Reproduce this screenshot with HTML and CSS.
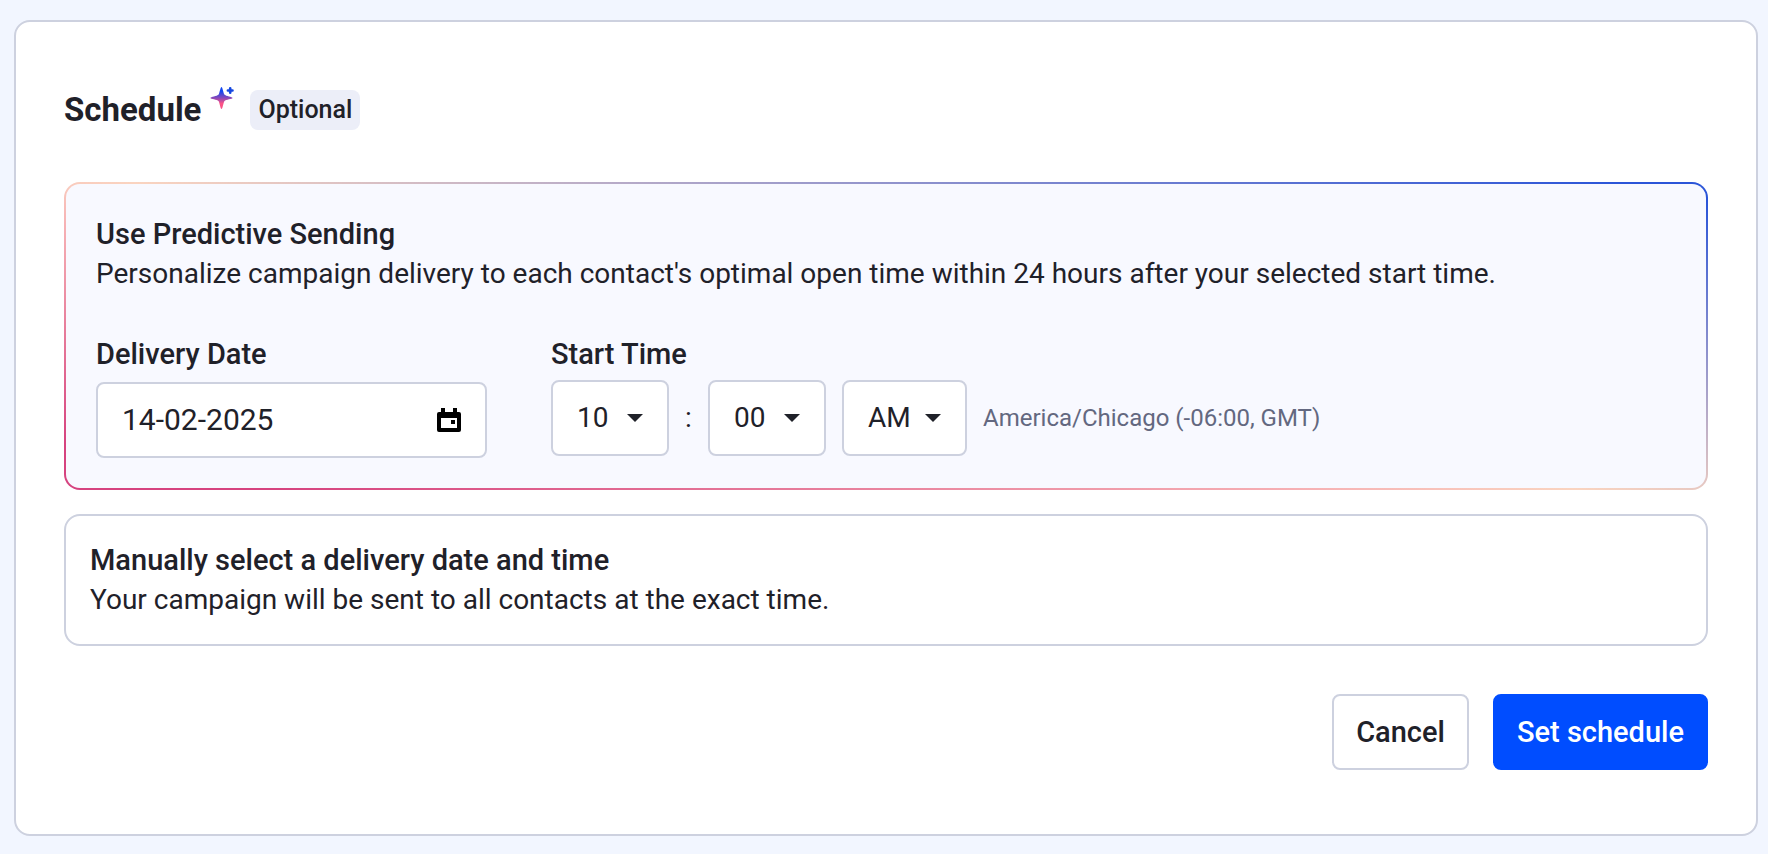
FILE: index.html
```html
<!DOCTYPE html>
<html lang="en">
<head>
<meta charset="utf-8">
<meta name="viewport" content="width=device-width, initial-scale=1">
<title>Schedule</title>
<link rel="stylesheet" href="styles.css">
</head>
<body>
<form class="card">
  <header class="card-header">
    <h1 class="title">Schedule</h1>
    <svg class="sparkle" viewBox="0 0 24 24" aria-hidden="true">
      <defs>
        <linearGradient id="spark" x1="0" y1="0" x2="0" y2="1">
          <stop offset="0.2" stop-color="#1447f0"/>
          <stop offset="0.5" stop-color="#8a48b8"/>
          <stop offset="0.75" stop-color="#fb5286"/>
        </linearGradient>
      </defs>
      <path fill="url(#spark)" d="M11.500 1C12.500 1 12.900 5 14.300 8.500C16 10.300 22.500 10.800 22.500 12C22.500 13.200 16 13.400 14.300 15.200C12.900 18.700 12.500 23 11.500 23C10.500 23 10.100 18.700 8.700 15.200C7 13.400 0.500 13.200 0.500 12C0.500 10.800 7 10.300 8.700 8.500C10.100 5 10.500 1 11.500 1Z"/>
      <path d="M20.200 2.200V6.800M17.900 4.500H22.500" fill="none" stroke="#1447e0" stroke-width="2.600" stroke-linecap="round"/>
    </svg>
    <span class="badge">Optional</span>
  </header>

  <section class="option option-predictive">
    <h2 class="option-title">Use Predictive Sending</h2>
    <p class="option-text">Personalize campaign delivery to each contact's optimal open time within 24 hours after your selected start time.</p>
    <div class="fields">
      <div class="field field-date">
        <label class="label" for="delivery-date">Delivery Date</label>
        <div class="control date-control">
          <input class="date-input" id="delivery-date" type="text" value="14-02-2025">
          <button class="date-button" type="button" aria-label="Open calendar">
            <svg class="calendar" viewBox="0 0 24 24" aria-hidden="true">
              <path fill-rule="evenodd" d="M4 0H8V4H16V0H20V4H22A2 2 0 0 1 24 6V22A2 2 0 0 1 22 24H2A2 2 0 0 1 0 22V6A2 2 0 0 1 2 4H4ZM4 10V20H20V10ZM14 12H18V16H14Z"/>
            </svg>
          </button>
        </div>
      </div>
      <div class="field">
        <label class="label" for="start-hour">Start Time</label>
        <div class="time">
          <span class="picker">
            <select class="control select" id="start-hour"><option>10</option></select>
            <svg class="arrow" viewBox="0 0 16 8" aria-hidden="true"><path d="M0 0H16L8 8Z"/></svg>
          </span>
          <span class="colon">:</span>
          <span class="picker">
            <select class="control select" aria-label="Minutes"><option>00</option></select>
            <svg class="arrow" viewBox="0 0 16 8" aria-hidden="true"><path d="M0 0H16L8 8Z"/></svg>
          </span>
          <span class="picker picker-period">
            <select class="control select" aria-label="AM or PM"><option>AM</option></select>
            <svg class="arrow" viewBox="0 0 16 8" aria-hidden="true"><path d="M0 0H16L8 8Z"/></svg>
          </span>
          <span class="zone">America/Chicago (-06:00, GMT)</span>
        </div>
      </div>
    </div>
  </section>

  <section class="option">
    <h2 class="option-title">Manually select a delivery date and time</h2>
    <p class="option-text">Your campaign will be sent to all contacts at the exact time.</p>
  </section>

  <footer class="actions">
    <button class="button" type="button">Cancel</button>
    <button class="button button-primary" type="submit">Set schedule</button>
  </footer>
</form>
</body>
</html>
```
FILE: styles.css
```css
* {
  box-sizing: border-box;
}

body {
  margin: 0;
  padding: 20px 10px 18px 14px;
  background: #f2f6ff;
  color: #1f2129;
  font: 400 28px/40px Roboto, sans-serif;
}

h1, h2, p {
  margin: 0;
}

input, select, button {
  font: inherit;
  color: inherit;
}

.card {
  padding: 68px 48px 64px;
  background: #fff;
  border: 2px solid #cdd1df;
  border-radius: 16px;
}

.card-header {
  display: flex;
  align-items: flex-start;
  margin-bottom: 52px;
}

.title {
  font-size: 33px;
  font-weight: 700;
}

.sparkle {
  width: 24px;
  height: 24px;
  margin: -4px 16px 0 9px;
}

.badge {
  padding: 0 8px;
  border-radius: 8px;
  background: #eceef8;
  font-size: 25px;
  font-weight: 500;
}

.option {
  margin-bottom: 24px;
  padding: 24px;
  border: 2px solid #cdd1df;
  border-radius: 16px;
}

.option-predictive {
  padding: 30px;
  border-color: transparent;
  background:
    linear-gradient(#f8f9ff, #f8f9ff) padding-box,
    linear-gradient(12deg, #d6437f 7%, #f6b0b4 40%, #fad4c0 49%, #2b55d8 97%) border-box;
}

.option-title,
.label,
.button {
  font-size: 29px;
  font-weight: 500;
}

.fields {
  display: flex;
  gap: 64px;
  margin-top: 40px;
}

.field {
  display: flex;
  flex-direction: column;
  gap: 6px;
}

.field-date {
  width: 391px;
  gap: 8px;
}

.control {
  height: 76px;
  border: 2px solid #cdd1df;
  border-radius: 8px;
  background: #fff;
}

.date-control {
  display: flex;
  align-items: center;
  padding: 0 24px;
}

.date-input {
  flex: 1;
  width: 100%;
  min-width: 0;
  padding: 0;
  border: 0;
  background: none;
  font-size: 30px;
  outline: 0;
}

.date-button {
  display: flex;
  padding: 0;
  border: 0;
  background: none;
}

.calendar {
  width: 24px;
  height: 24px;
  fill: #000;
}

.time {
  display: flex;
  align-items: center;
}

.picker {
  display: grid;
  align-items: center;
  width: 118px;
}

.picker-period {
  width: 125px;
  margin: 0 16px;
}

.select {
  grid-area: 1 / 1;
  appearance: none;
  width: 100%;
  padding: 0 24px;
}

.arrow {
  grid-area: 1 / 1;
  justify-self: end;
  width: 16px;
  height: 8px;
  margin-right: 26px;
  fill: #1f2129;
  pointer-events: none;
}

.colon {
  width: 39px;
  text-align: center;
}

.zone {
  color: #636880;
  font-size: 24px;
}

.actions {
  display: flex;
  justify-content: flex-end;
  gap: 24px;
  margin-top: 48px;
}

.button {
  height: 76px;
  padding: 0 22px;
  border: 2px solid #cdd1df;
  border-radius: 8px;
  background: #fff;
}

.button-primary {
  border-color: #004dff;
  background: #004dff;
  color: #fff;
}
```
